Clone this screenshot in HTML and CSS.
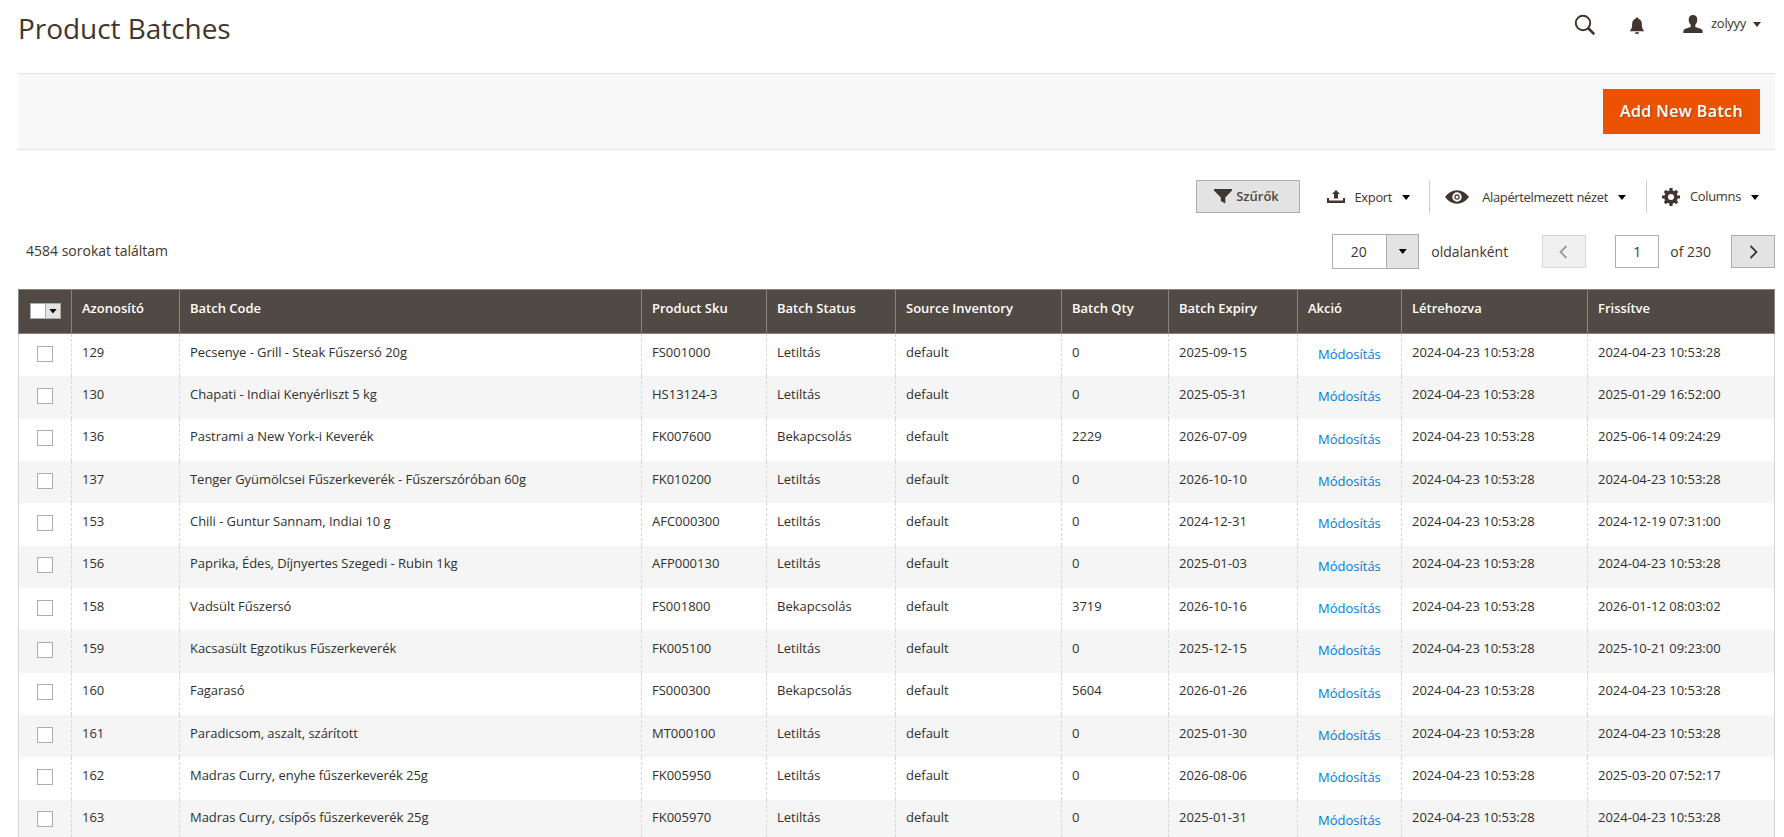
FILE: index.html
```html
<!DOCTYPE html>
<html lang="hu">
<head>
    <meta charset="UTF-8">
    <title>Product Batches</title>
    <link rel="stylesheet" href="styles.css">
</head>
<body>
    <header class="page-header">
        <h1 class="page-title">Product Batches</h1>
        <div class="header-tools">
            <svg class="icon-search" width="22" height="22" viewBox="0 0 22 22"><circle cx="9" cy="9" r="7.2" fill="none" stroke="#41362f" stroke-width="2"/><path d="M14 14l6.3 6.2" stroke="#41362f" stroke-width="2.6"/></svg>
            <svg class="icon-bell" width="16" height="18" viewBox="0 0 16 18"><path d="M8 0.5c.9 0 1.500.5 1.500 1.200 2 .7 3.300 2.400 3.300 4.600 0 4 .6 5.800 2.400 7.900H.8c1.800-2.100 2.400-3.900 2.400-7.900 0-2.200 1.300-3.900 3.300-4.600 0-.7.600-1.200 1.500-1.200zM6 15.200h4c0 1.200-.8 1.900-2 1.900s-2-.7-2-1.900z" fill="#41362f"/></svg>
            <div class="user">
                <svg width="20" height="18" viewBox="0 0 20 18"><path d="M10 0c2.700 0 4.300 1.600 4.300 4.300 0 2.300-.8 4.300-2 5.400v2c1.400 1.300 6.200 1.400 7 3.300.3.700.4 2 .4 3H.3c0-1 .1-2.300.4-3 .8-1.900 5.600-2 7-3.300v-2c-1.200-1.100-2-3.100-2-5.400C5.700 1.600 7.300 0 10 0z" fill="#41362f"/></svg>
                <span>zolyyy</span>
                <i class="caret"></i>
            </div>
        </div>
    </header>

    <div class="page-actions">
        <button type="button" class="btn-primary">Add New Batch</button>
    </div>

    <div class="grid-tools">
        <button type="button" class="btn-filter">
            <svg width="18" height="15" viewBox="0 0 18 15"><path d="M0 0h18v1.500L11.300 8.500V14.500L6.800 12V8.500L0 1.500z" fill="#41362f"/></svg>
            <span>Szűrők</span>
        </button>
        <div class="tool tool-export">
            <svg width="18" height="13" viewBox="0 0 18 13"><path d="M0 8h2v2.500h14V8h2v5H0zM9 0l4 4h-2v4.500H7V4H5z" fill="#41362f"/></svg>
            <span>Export</span>
            <i class="caret"></i>
        </div>
        <div class="tool tool-view">
            <svg width="24" height="14" viewBox="0 0 24 14"><path d="M0 7Q5 .3 12 .3T24 7Q19 13.700 12 13.700T0 7z" fill="#41362f"/><circle cx="12" cy="7" r="3.700" fill="#41362f" stroke="#fff" stroke-width="2"/><circle cx="12" cy="7" r="1.500" fill="#fff"/></svg>
            <span>Alapértelmezett nézet</span>
            <i class="caret"></i>
        </div>
        <div class="tool tool-columns">
            <svg width="18" height="18" viewBox="-9 -9 18 18"><circle r="4.900" fill="none" stroke="#41362f" stroke-width="3.800"/><path d="M0-9V-6M0 9V6M-9 0H-6M9 0H6M-6.200-6.200L-4-4M6.200 6.200L4 4M-6.200 6.200L-4 4M6.200-6.200L4-4" stroke="#41362f" stroke-width="3.200"/></svg>
            <span>Columns</span>
            <i class="caret"></i>
        </div>
    </div>

    <div class="grid-pager">
        <span class="records">4584 sorokat találtam</span>
        <div class="per-page"><span>20</span><b><i class="caret"></i></b></div>
        <span class="per-page-label">oldalanként</span>
        <button type="button" class="btn-page disabled"><svg width="10" height="14" viewBox="0 0 10 14"><path d="M7.500 1l-6 6 6 6" fill="none" stroke="#41362f" stroke-width="1.800"/></svg></button>
        <div class="page-input">1</div>
        <span class="page-total">of 230</span>
        <button type="button" class="btn-page"><svg width="10" height="14" viewBox="0 0 10 14"><path d="M2.500 1l6 6-6 6" fill="none" stroke="#41362f" stroke-width="1.800"/></svg></button>
    </div>

    <table class="data-grid">
        <colgroup>
            <col class="c-check"><col class="c-id"><col class="c-code"><col class="c-sku"><col class="c-status"><col class="c-source"><col class="c-qty"><col class="c-expiry"><col class="c-action"><col class="c-created"><col class="c-updated">
        </colgroup>
        <thead>
            <tr><th><div class="multicheck"><b><i class="caret"></i></b></div></th><th>Azonosító</th><th>Batch Code</th><th>Product Sku</th><th>Batch Status</th><th>Source Inventory</th><th>Batch Qty</th><th>Batch Expiry</th><th>Akció</th><th>Létrehozva</th><th>Frissítve</th></tr>
        </thead>
        <tbody>
            <tr><td><i class="checkbox"></i></td><td>129</td><td>Pecsenye - Grill - Steak Fűszersó 20g</td><td>FS001000</td><td>Letiltás</td><td>default</td><td>0</td><td>2025-09-15</td><td><a>Módosítás</a></td><td>2024-04-23 10:53:28</td><td>2024-04-23 10:53:28</td></tr>
            <tr><td><i class="checkbox"></i></td><td>130</td><td>Chapati - Indiai Kenyérliszt 5 kg</td><td>HS13124-3</td><td>Letiltás</td><td>default</td><td>0</td><td>2025-05-31</td><td><a>Módosítás</a></td><td>2024-04-23 10:53:28</td><td>2025-01-29 16:52:00</td></tr>
            <tr><td><i class="checkbox"></i></td><td>136</td><td>Pastrami a New York-i Keverék</td><td>FK007600</td><td>Bekapcsolás</td><td>default</td><td>2229</td><td>2026-07-09</td><td><a>Módosítás</a></td><td>2024-04-23 10:53:28</td><td>2025-06-14 09:24:29</td></tr>
            <tr><td><i class="checkbox"></i></td><td>137</td><td>Tenger Gyümölcsei Fűszerkeverék - Fűszerszóróban 60g</td><td>FK010200</td><td>Letiltás</td><td>default</td><td>0</td><td>2026-10-10</td><td><a>Módosítás</a></td><td>2024-04-23 10:53:28</td><td>2024-04-23 10:53:28</td></tr>
            <tr><td><i class="checkbox"></i></td><td>153</td><td>Chili - Guntur Sannam, Indiai 10 g</td><td>AFC000300</td><td>Letiltás</td><td>default</td><td>0</td><td>2024-12-31</td><td><a>Módosítás</a></td><td>2024-04-23 10:53:28</td><td>2024-12-19 07:31:00</td></tr>
            <tr><td><i class="checkbox"></i></td><td>156</td><td>Paprika, Édes, Díjnyertes Szegedi - Rubin 1kg</td><td>AFP000130</td><td>Letiltás</td><td>default</td><td>0</td><td>2025-01-03</td><td><a>Módosítás</a></td><td>2024-04-23 10:53:28</td><td>2024-04-23 10:53:28</td></tr>
            <tr><td><i class="checkbox"></i></td><td>158</td><td>Vadsült Fűszersó</td><td>FS001800</td><td>Bekapcsolás</td><td>default</td><td>3719</td><td>2026-10-16</td><td><a>Módosítás</a></td><td>2024-04-23 10:53:28</td><td>2026-01-12 08:03:02</td></tr>
            <tr><td><i class="checkbox"></i></td><td>159</td><td>Kacsasült Egzotikus Fűszerkeverék</td><td>FK005100</td><td>Letiltás</td><td>default</td><td>0</td><td>2025-12-15</td><td><a>Módosítás</a></td><td>2024-04-23 10:53:28</td><td>2025-10-21 09:23:00</td></tr>
            <tr><td><i class="checkbox"></i></td><td>160</td><td>Fagarasó</td><td>FS000300</td><td>Bekapcsolás</td><td>default</td><td>5604</td><td>2026-01-26</td><td><a>Módosítás</a></td><td>2024-04-23 10:53:28</td><td>2024-04-23 10:53:28</td></tr>
            <tr><td><i class="checkbox"></i></td><td>161</td><td>Paradicsom, aszalt, szárított</td><td>MT000100</td><td>Letiltás</td><td>default</td><td>0</td><td>2025-01-30</td><td><a>Módosítás</a></td><td>2024-04-23 10:53:28</td><td>2024-04-23 10:53:28</td></tr>
            <tr><td><i class="checkbox"></i></td><td>162</td><td>Madras Curry, enyhe fűszerkeverék 25g</td><td>FK005950</td><td>Letiltás</td><td>default</td><td>0</td><td>2026-08-06</td><td><a>Módosítás</a></td><td>2024-04-23 10:53:28</td><td>2025-03-20 07:52:17</td></tr>
            <tr><td><i class="checkbox"></i></td><td>163</td><td>Madras Curry, csípős fűszerkeverék 25g</td><td>FK005970</td><td>Letiltás</td><td>default</td><td>0</td><td>2025-01-31</td><td><a>Módosítás</a></td><td>2024-04-23 10:53:28</td><td>2024-04-23 10:53:28</td></tr>
        </tbody>
    </table>
</body>
</html>
```

FILE: styles.css
```css
* {
    box-sizing: border-box;
}

body {
    margin: 0;
    height: 837px;
    padding: 0 9px 0 18px;
    overflow: hidden;
    background: #fff;
    color: #41362f;
    font-family: 'Open Sans', 'Noto Sans', sans-serif;
    font-size: 14px;
    line-height: 19px;
}

svg {
    display: block;
    flex: none;
}

button {
    font-family: inherit;
    border-radius: 0;
    padding: 0;
}

.caret {
    width: 8px;
    height: 5px;
    flex: none;
    background: #000;
    clip-path: polygon(0 0, 100% 0, 50% 100%);
}

/* header */
.page-header {
    display: flex;
    justify-content: space-between;
    height: 73px;
}

.page-title {
    margin: 9px 0 0;
    font-size: 28px;
    font-weight: 400;
    line-height: 38px;
    letter-spacing: -0.05px;
}

.header-tools {
    display: flex;
    align-items: flex-start;
    padding: 14px 14px 0 0;
}

.icon-bell {
    margin: 3px 38px 0 33px;
}

.user {
    display: flex;
    align-items: center;
    font-size: 13px;
}

.user span {
    margin: 0 7px 0 8px;
    letter-spacing: -0.3px;
}

.user .caret {
    margin-top: 2px;
    background: #41362f;
}

/* main actions */
.page-actions {
    display: flex;
    justify-content: flex-end;
    height: 77px;
    padding: 15px 15px 0 0;
    background: #f8f8f8;
    border-top: 1px solid #e3e3e3;
    border-bottom: 1px solid #e3e3e3;
}

.btn-primary {
    width: 157px;
    height: 45px;
    padding-bottom: 2px;
    background: #eb5202;
    border: 1px solid #eb5202;
    color: #fff;
    font-size: 16px;
    font-weight: 600;
    letter-spacing: 0.4px;
    text-shadow: 1px 1px 0 rgba(0, 0, 0, 0.25);
}

/* grid toolbar */
.grid-tools {
    display: flex;
    justify-content: flex-end;
    padding: 30px 16px 0 0;
    font-size: 13px;
}

.btn-filter {
    display: flex;
    align-items: center;
    justify-content: center;
    gap: 4px;
    width: 104px;
    height: 33px;
    margin-right: 27px;
    padding-right: 4px;
    background: #e3e3e3;
    border: 1px solid #adadad;
    color: #514943;
    font-size: 13px;
    font-weight: 600;
}

.btn-filter span {
    padding-bottom: 2px;
}

.tool {
    display: flex;
    align-items: center;
    height: 33px;
}

.tool span {
    margin: 0 10px;
    letter-spacing: -0.35px;
}

.tool .caret {
    margin-top: 2px;
}

.tool-export {
    padding-right: 19px;
}

.tool-view {
    padding: 0 20px 0 15px;
    border-left: 1px solid #ccc;
}

.tool-export span,
.tool-view span {
    padding-top: 2px;
}

.tool-export span {
    margin-left: 9px;
}

.tool-view span {
    margin-left: 13px;
}

.tool-columns {
    padding-left: 15px;
    border-left: 1px solid #ccc;
}

.grid-pager {
    display: flex;
    align-items: center;
    height: 35px;
    margin-top: 21px;
}

.records {
    margin: 0 auto 0 8px;
    padding-bottom: 2px;
}

.per-page {
    display: flex;
    width: 87px;
    height: 35px;
    border: 1px solid #adadad;
    line-height: 34px;
    text-align: center;
}

.per-page span {
    flex: 1;
    padding-right: 2px;
}

.per-page b {
    display: flex;
    align-items: center;
    justify-content: center;
    width: 32px;
    background: #e3e3e3;
    border-left: 1px solid #adadad;
}

.per-page-label {
    margin: 0 34px 0 12px;
}

.btn-page {
    display: flex;
    align-items: center;
    justify-content: center;
    width: 44px;
    height: 33px;
    background: #e3e3e3;
    border: 1px solid #adadad;
}

.btn-page.disabled {
    opacity: 0.5;
}

.page-input {
    width: 44px;
    height: 33px;
    margin-left: 29px;
    border: 1px solid #adadad;
    line-height: 32px;
    text-align: center;
}

.page-total {
    margin: 0 20px 0 11px;
}

/* data grid */
.data-grid {
    width: 1757px;
    margin-top: 20px;
    border-collapse: separate;
    border-spacing: 0;
    table-layout: fixed;
    color: #303030;
    font-size: 13px;
    line-height: 18px;
}

.c-check { width: 53px; }
.c-id { width: 108px; }
.c-code { width: 462px; }
.c-sku { width: 125px; }
.c-status { width: 129px; }
.c-source { width: 166px; }
.c-qty { width: 107px; }
.c-expiry { width: 129px; }
.c-action { width: 104px; }
.c-created { width: 186px; }
.c-updated { width: 188px; }

.data-grid th {
    height: 45px;
    padding: 0 10px 8px;
    background: #514943;
    border: 1px solid #8a837f;
    border-right: 0;
    color: #fff;
    font-weight: 600;
    text-align: left;
}

.data-grid th:last-child {
    border-right: 1px solid #8a837f;
}

.data-grid th:first-child {
    padding: 0 0 1px 11px;
}

.data-grid td {
    height: 42.33px;
    padding: 8.7px 10px 0;
    border-left: 1px dashed #d6d6d6;
    vertical-align: top;
}

.data-grid td:first-child {
    padding: 11.7px 0 0 18px;
    border-left-style: solid;
}

.data-grid td:nth-child(3) {
    letter-spacing: -0.04px;
}

.data-grid td:last-child {
    border-right: 1px solid #d6d6d6;
}

.data-grid tbody tr:nth-child(even) {
    background: #f5f5f5;
}

.data-grid a {
    display: block;
    margin: 2.3px 0 0 10px;
    color: #007bdb;
}

.checkbox {
    display: block;
    width: 16px;
    height: 16px;
    background: #fff;
    border: 1px solid #adadad;
}

.multicheck {
    display: flex;
    justify-content: flex-end;
    width: 31px;
    height: 16px;
    background: #fff;
    border: 1px solid #adadad;
}

.multicheck b {
    display: flex;
    align-items: center;
    justify-content: center;
    width: 15px;
    background: #e3e3e3;
    border-left: 1px solid #adadad;
}
```
